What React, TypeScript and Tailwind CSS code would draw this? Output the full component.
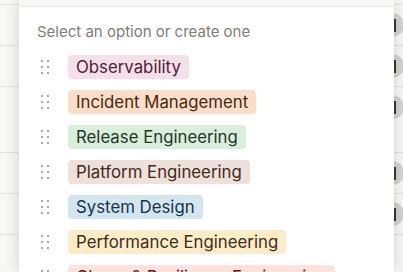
const options = [
  { label: "Observability", tag: "bg-[#f5e0e9] text-[#4c2337]" },
  { label: "Incident Management", tag: "bg-[#fadec9] text-[#49290e]" },
  { label: "Release Engineering", tag: "bg-[#dbeddb] text-[#1c3829]" },
  { label: "Platform Engineering", tag: "bg-[#eee0da] text-[#442a1e]" },
  { label: "System Design", tag: "bg-[#d3e5ef] text-[#183347]" },
  { label: "Performance Engineering", tag: "bg-[#fdecc8] text-[#402c1b]" },
  { label: "Chaos & Resilience Engineering", tag: "bg-[#ffe2dd] text-[#5d1715]" },
];

// background table rows peeking out on both sides of the menu
const rows = [
  { h: "h-[5px]", avatar: false },
  { h: "h-[41px]", avatar: true },
  { h: "h-[41px]", avatar: true },
  { h: "h-[66px]", avatar: true },
  { h: "h-[41px]", avatar: true },
  { h: "h-[41px]", avatar: true },
  { h: "h-[41px]", avatar: false },
];

function DragHandle() {
  return (
    <div className="grid grid-cols-2 gap-x-[4px] gap-y-[4px]">
      {[0, 1, 2, 3, 4, 5].map((i) => (
        <span key={i} className="h-[2px] w-[2px] bg-[#a9a8a5]" />
      ))}
    </div>
  );
}

export default function App() {
  return (
    <div
      className="relative h-[272px] w-[403px] overflow-hidden bg-[#f7f7f6]"
      style={{ fontFamily: "Inter, 'Noto Sans', sans-serif" }}
    >
      <div className="flex flex-col">
        {rows.map((row, i) => (
          <div
            key={i}
            className={`${row.h} flex items-start justify-end border-b border-[#e3e3e1] ${
              i === rows.length - 1 ? "border-b-0" : ""
            }`}
          >
            {row.avatar ? (
              <div className="mr-[-1px] mt-[8px] flex h-[24px] w-[24px] items-center rounded-full bg-[#d4d3cf] pl-[14px]">
                <span className="h-[13px] w-[2px] bg-[#3a3a38]" />
              </div>
            ) : null}
          </div>
        ))}
      </div>

      <div className="absolute left-[19px] top-0 h-[272px] w-[375px] bg-white shadow-[0_0_14px_rgba(15,15,15,0.16)]">
        <div className="h-[7px] border-b border-[#ebebea] bg-[#f7f7f5]" />
        <p className="pl-[18px] pt-[15px] text-[15px] leading-[20px] text-[#7f7e7a]">
          Select an option or create one
        </p>
        <div className="mt-[7px] flex flex-col">
          {options.map((option) => (
            <div key={option.label} className="flex h-[35px] items-center pl-[22px]">
              <DragHandle />
              <span
                className={`ml-[19px] h-6 whitespace-nowrap rounded-[4px] px-2 text-[16.8px] leading-6 ${option.tag}`}
              >
                {option.label}
              </span>
            </div>
          ))}
        </div>
      </div>
    </div>
  );
}
